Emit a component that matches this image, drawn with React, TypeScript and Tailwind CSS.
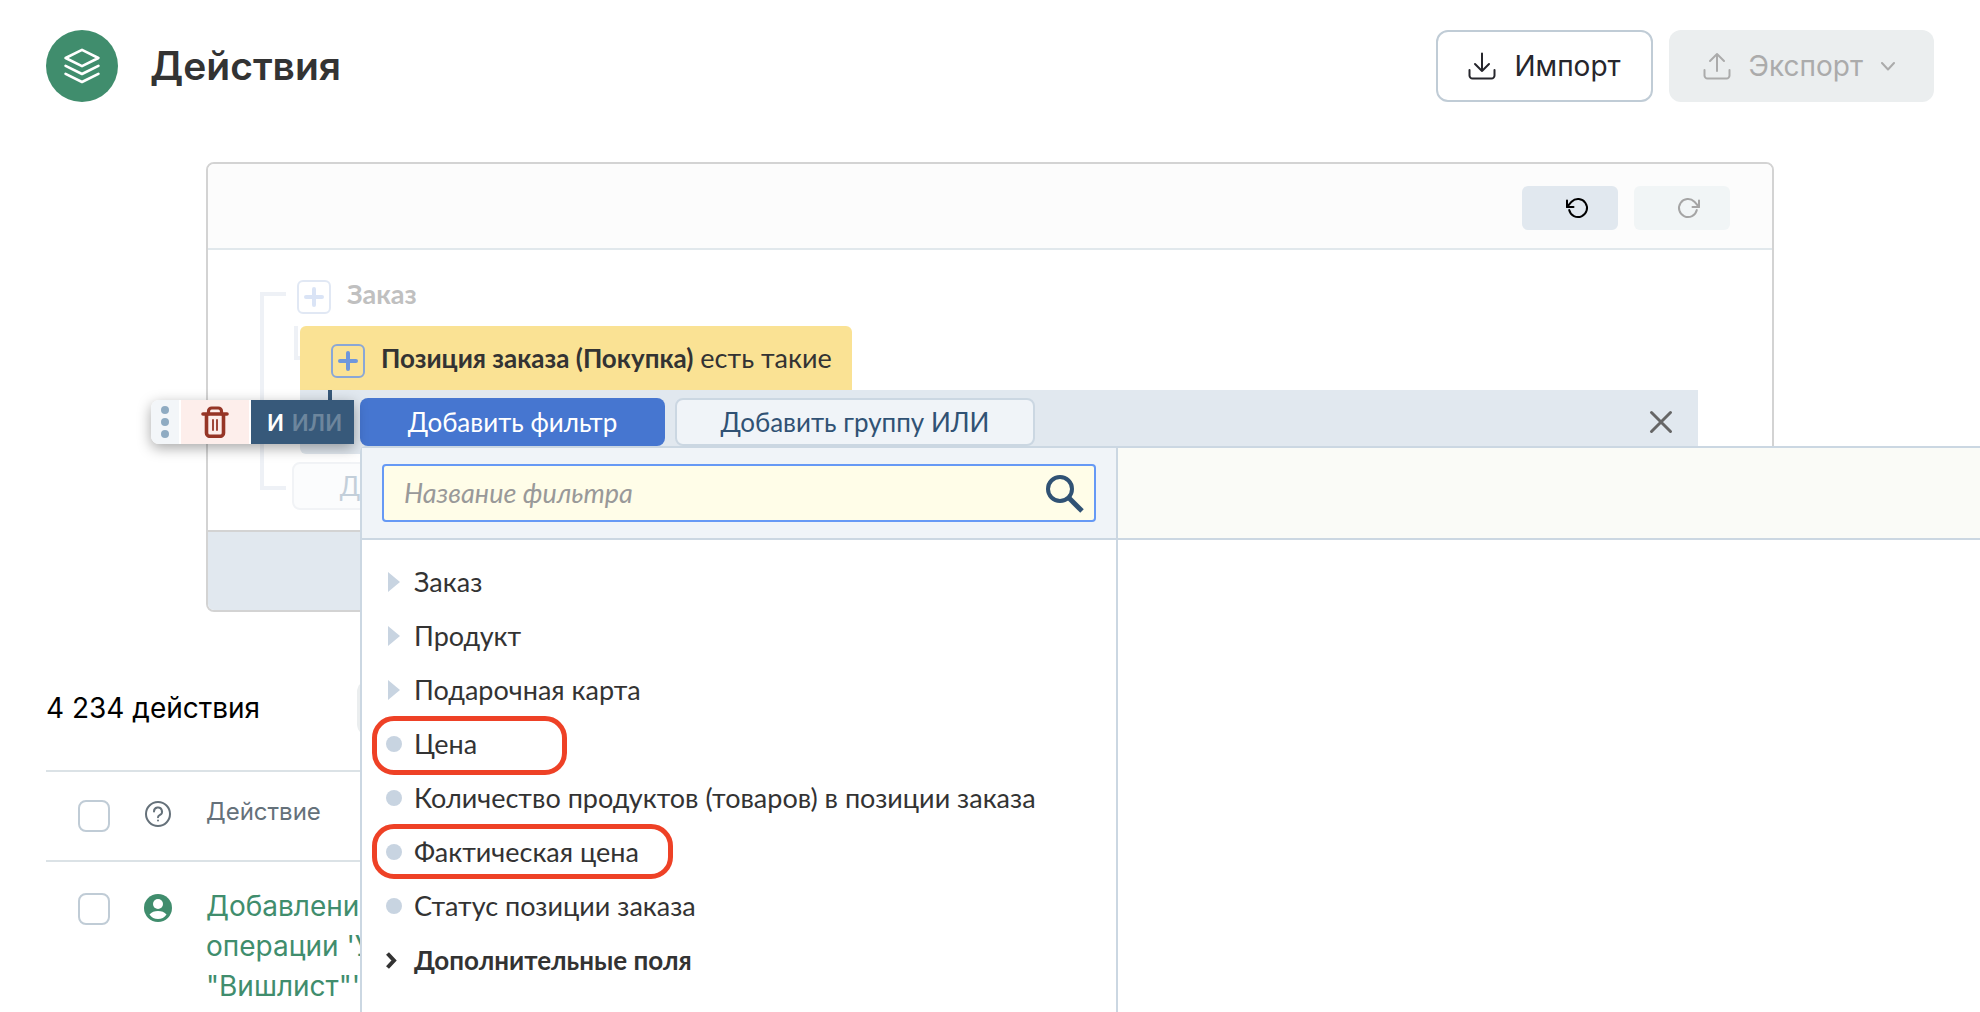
import type { ReactNode } from "react";

type FilterItem = {
  label: string;
  kind: "group" | "field" | "section";
  outline?: string;
};

const FILTERS: FilterItem[] = [
  { label: "Заказ", kind: "group" },
  { label: "Продукт", kind: "group" },
  { label: "Подарочная карта", kind: "group" },
  { label: "Цена", kind: "field", outline: "w-[195px] h-[59px]" },
  { label: "Количество продуктов (товаров) в позиции заказа", kind: "field" },
  { label: "Фактическая цена", kind: "field", outline: "w-[301px] h-[55px]" },
  { label: "Статус позиции заказа", kind: "field" },
  { label: "Дополнительные поля", kind: "section" },
];

function LayersIcon() {
  return (
    <svg width="36" height="36" viewBox="0 0 36 36" fill="none" stroke="#fff" strokeWidth="2.6" strokeLinecap="round" strokeLinejoin="round">
      <path d="M18 1.8 34.4 10 18 18.2 1.6 10z" />
      <path d="M1.6 17.8 18 26l16.4-8.2" />
      <path d="M1.6 25.8 18 34l16.4-8.2" />
    </svg>
  );
}

function TrayIcon({ up }: { up?: boolean }) {
  return (
    <svg width="28" height="28" viewBox="0 0 28 28" fill="none" stroke="currentColor" strokeWidth="2" strokeLinecap="round" strokeLinejoin="round">
      <path d={up ? "M14 19V2M7 9l7-7 7 7" : "M14 1.5v17.5M7 12l7 7 7-7"} />
      <path d="M1.5 18v5.500a3 3 0 0 0 3 3h19a3 3 0 0 0 3-3V18" />
    </svg>
  );
}

function RotateIcon({ flip }: { flip?: boolean }) {
  return (
    <svg width="24" height="24" viewBox="0 0 24 24" fill="none" stroke="currentColor" strokeWidth="2" strokeLinecap="round" strokeLinejoin="round">
      <g transform={flip ? "translate(24 0) scale(-1 1)" : undefined}>
        <path d="M2 4.500v6.500h6.500" />
        <path d="M2 11 6.600 5.700A9 9 0 1 1 4.200 14" />
      </g>
    </svg>
  );
}

function TrashIcon() {
  return (
    <svg width="28" height="32" viewBox="0 0 28 32" fill="none" stroke="#963526" strokeLinecap="round" strokeLinejoin="round">
      <path strokeWidth="3.600" d="M2 8h24M5.500 8.500V27a3.300 3.300 0 0 0 3.300 3.300h10.400A3.300 3.300 0 0 0 22.500 27V8.500" />
      <path strokeWidth="3.200" d="M7.500 8V5.200A3.200 3.200 0 0 1 10.700 2h6.600a3.200 3.200 0 0 1 3.200 3.200V8" />
      <path strokeWidth="1.800" d="M12 14v10M16 14v10" />
    </svg>
  );
}

function SearchIcon() {
  return (
    <svg width="40" height="40" viewBox="0 0 40 40" fill="none" stroke="#305274">
      <circle cx="16" cy="16" r="12" strokeWidth="4" />
      <path d="M25 25l13 13" strokeWidth="5" />
    </svg>
  );
}

function PlusButton({ label }: { label: string }) {
  return (
    <button
      type="button"
      aria-label={label}
      className="flex size-[34px] shrink-0 items-center justify-center rounded-md border-2 border-[#8aa7d6] text-[#6f97dc]"
    >
      <svg width="20" height="20" viewBox="0 0 20 20" fill="none" stroke="currentColor" strokeWidth="4" strokeLinecap="round">
        <path d="M10 2v16M2 10h16" />
      </svg>
    </button>
  );
}

function Checkbox({ label }: { label: string }) {
  return (
    <input
      type="checkbox"
      aria-label={label}
      className="block size-8 appearance-none rounded-lg border-2 border-[#c0ccd6] bg-white"
    />
  );
}

function Marker({ kind }: { kind: FilterItem["kind"] }) {
  if (kind === "group") {
    return (
      <svg width="16" height="20" viewBox="0 0 16 20" fill="#c8d4e1">
        <path d="M2 0l12 10L2 20z" />
      </svg>
    );
  }
  if (kind === "field") {
    return <span className="size-4 rounded-full bg-[#c8d4e1]" />;
  }
  return (
    <svg width="16" height="20" viewBox="0 0 16 20" fill="none" stroke="#333" strokeWidth="4">
      <path d="M1.500 3.500l6.500 7-6.500 7" />
    </svg>
  );
}

function FilterPopup() {
  return (
    <div className="absolute top-14 left-[60px] z-20 flex h-screen w-screen rounded-tl-md border-t-2 border-l-2 border-[#cbd7e2] bg-white">
      <div className="w-[756px] shrink-0 border-r-2 border-[#cbd7e2]">
        <div className="border-b-2 border-[#cbd7e2] bg-[#f0f4f8] px-5 py-4">
          <label className="flex h-[58px] items-center rounded-sm border-2 border-[#6699f5] bg-[#fffde8] pr-[10px] pl-5">
            <input
              type="text"
              aria-label="Название фильтра"
              placeholder="Название фильтра"
              className="min-w-0 flex-1 bg-transparent text-[27px] italic outline-none placeholder:text-[#999]"
            />
            <SearchIcon />
          </label>
        </div>
        <ul className="pt-[15px]">
          {FILTERS.map((item) => (
            <li key={item.label} className="relative">
              <button
                type="button"
                className={`flex h-[54px] w-full items-center gap-3 pl-6 text-left whitespace-nowrap text-[#333] ${
                  item.kind === "section" ? "text-[26px] font-bold" : "text-[27px]"
                }`}
              >
                <Marker kind={item.kind} />
                {item.label}
              </button>
              {item.outline && (
                <span
                  className={`pointer-events-none absolute -top-px left-[10px] rounded-[22px] border-5 border-[#ee4126] ${item.outline}`}
                />
              )}
            </li>
          ))}
        </ul>
      </div>
      <div className="flex-1">
        <div className="h-[92px] border-b-2 border-[#cbd7e2] bg-[#fafbf7]" />
      </div>
    </div>
  );
}

function RowTools() {
  return (
    <div className="absolute top-[10px] -left-[149px] z-10 flex h-11 gap-0.5 rounded-l-lg bg-white shadow-[0_4px_14px_rgba(0,0,0,0.35)]">
      <button type="button" aria-label="Переместить" className="flex w-7 flex-col items-center justify-center gap-1 rounded-l-lg bg-[#f3f6f9]">
        <span className="size-2 rounded-full bg-[#8fabc2]" />
        <span className="size-2 rounded-full bg-[#8fabc2]" />
        <span className="size-2 rounded-full bg-[#8fabc2]" />
      </button>
      <button type="button" aria-label="Удалить" className="flex w-[68px] items-center justify-center bg-[#fdeeeb]">
        <TrashIcon />
      </button>
      <button type="button" className="flex w-[103px] items-center justify-center gap-2 bg-[#37597a] pl-1 text-[22px] font-bold">
        <span className="text-white">И</span>
        <span className="text-[#6d869d]">ИЛИ</span>
      </button>
    </div>
  );
}

function FilterTree() {
  return (
    <div className="flex h-[280px] pt-[30px] pl-[52px] font-['Lato','Noto_Sans',sans-serif]">
      <div className="mt-3 h-[198px] w-[26px] shrink-0 border-y-4 border-l-4 border-[#eef1f6]" />
      <div className="flex-1">
        <div className="flex h-[34px] items-center gap-4 pl-[11px] text-[27px] font-bold">
          <span className="opacity-25">
            <PlusButton label="Добавить" />
          </span>
          <span className="pb-1.5 text-[#c0c0c0]">Заказ</span>
        </div>
        <div className="mt-3 ml-2 flex">
          <div className="h-[34px] w-1.5 shrink-0 border-b-4 border-l-4 border-[#eef1f6]" />
          <div className="flex-1 pr-[74px]">
            <div className="flex h-16 w-fit items-center gap-4 rounded-t-md bg-[#fae294] pr-5 pl-[31px] text-[27px] text-[#333]">
              <span className="pt-1.5">
                <PlusButton label="Добавить условие" />
              </span>
              <span className="whitespace-nowrap">
                <b className="text-[26px]">Позиция заказа (Покупка)</b> есть такие
              </span>
            </div>
            <div className="relative flex h-16 items-start rounded-bl-md bg-[#e1e8ef] pt-2 pl-[60px]">
              <span className="absolute top-0 left-7 h-[10px] w-1 bg-[#37597a]" />
              <RowTools />
              <button type="button" className="h-12 min-w-[305px] rounded-lg bg-[#4676d0] text-[26px] whitespace-nowrap text-white">
                Добавить фильтр
              </button>
              <button
                type="button"
                className="ml-[10px] h-12 min-w-[360px] rounded-lg border-2 border-[#cbd7e2] bg-[#f0f4f8] text-[26px] whitespace-nowrap text-[#305274]"
              >
                Добавить группу ИЛИ
              </button>
              <button type="button" aria-label="Закрыть" className="mr-6 ml-auto flex h-12 items-center">
                <svg width="26" height="26" viewBox="0 0 26 26" fill="none" stroke="#666" strokeWidth="3" strokeLinecap="round">
                  <path d="M3.500 3.500l19 19M22.500 3.500l-19 19" />
                </svg>
              </button>
              <FilterPopup />
            </div>
          </div>
        </div>
        <button
          type="button"
          className="mt-2 ml-1.5 h-12 min-w-[305px] rounded-lg border-2 border-[#f1f3f6] bg-[#fbfcfd] text-[26px] whitespace-nowrap text-[#c3cfda]"
        >
          Добавить фильтр
        </button>
      </div>
    </div>
  );
}

function HeaderButton({ children, className }: { children: ReactNode; className: string }) {
  return (
    <button type="button" className={`flex h-[72px] items-center gap-[18px] rounded-xl text-[28px] ${className}`}>
      {children}
    </button>
  );
}

export default function App() {
  return (
    <div className="h-screen overflow-hidden bg-white px-[46px] pt-[30px] font-['Inter',sans-serif]">
      <header className="flex items-center justify-between">
        <div className="flex items-center gap-8">
          <span className="flex size-[72px] items-center justify-center rounded-full bg-[#408d6d]">
            <LayersIcon />
          </span>
          <h1 className="text-[39px] font-semibold text-[#333]">Действия</h1>
        </div>
        <div className="flex gap-4">
          <HeaderButton className="border-2 border-[#c0ccd6] px-[30px] text-[#26262c]">
            <TrayIcon />
            Импорт
          </HeaderButton>
          <HeaderButton className="bg-[#ebeeef] pr-[39px] pl-[34px] text-[#ababab]">
            <TrayIcon up />
            Экспорт
            <svg width="14" height="9" viewBox="0 0 14 9" fill="none" stroke="currentColor" strokeWidth="2" strokeLinecap="round" strokeLinejoin="round">
              <path d="M1 1l6 6.500L13 1" />
            </svg>
          </HeaderButton>
        </div>
      </header>

      <section className="mx-auto mt-[60px] w-full max-w-[1568px] rounded-lg border-2 border-[#d3d3d3]">
        <div className="flex items-center justify-end gap-4 rounded-t-md border-b-2 border-[#e1e8ec] bg-[#fcfcfc] pt-[22px] pr-[42px] pb-[18px]">
          <button type="button" aria-label="Отменить" className="flex h-11 w-24 items-center justify-center rounded-md bg-[#e1e8ef] pl-[14px] text-black">
            <RotateIcon />
          </button>
          <button type="button" aria-label="Повторить" className="flex h-11 w-24 items-center justify-center rounded-md bg-[#f1f5f6] pl-[14px] text-[#a5a5a5]">
            <RotateIcon flip />
          </button>
        </div>
        <FilterTree />
        <div className="h-20 rounded-b-md border-t-2 border-[#d3d3d3] bg-[#e1e8ef]" />
      </section>

      <div className="mt-[68px] mb-[34px] flex h-14 items-center text-[28px] text-black">
        <span className="w-[311px]">4 234 действия</span>
        <button type="button" aria-label="Настроить" className="h-14 w-40 rounded-xl bg-[#ebeeef]" />
      </div>

      <table className="w-full table-fixed border-collapse text-left">
        <thead>
          <tr className="h-[90px] border-y-2 border-[#dbe2e6] align-top">
            <th className="w-[98px] pt-7 pl-8">
              <Checkbox label="Выбрать все" />
            </th>
            <th className="w-[62px] pt-7">
              <svg width="28" height="28" viewBox="0 0 28 28" fill="none" stroke="#65717a" strokeWidth="2" strokeLinecap="round">
                <circle cx="14" cy="14" r="12" />
                <path d="M10 11.500a4 4 0 1 1 6 3.400c-1.300.8-2 1.300-2 2.400" />
                <path d="M14 20.500v.1" />
              </svg>
            </th>
            <th className="pt-[22px] text-2xl leading-9 font-normal text-[#65717a]">Действие</th>
          </tr>
        </thead>
        <tbody>
          <tr className="align-top">
            <td className="pt-[31px] pl-8">
              <Checkbox label="Выбрать действие" />
            </td>
            <td className="pt-8">
              <svg width="28" height="28" viewBox="0 0 28 28">
                <circle cx="14" cy="14" r="14" fill="#408d6d" />
                <circle cx="14" cy="10" r="5" fill="#fff" />
                <path d="M5.500 20.500c2-2.500 5-3.500 8.500-3.500s6.500 1 8.500 3.500c-2 3-5 4.500-8.500 4.500s-6.500-1.500-8.500-4.500z" fill="#fff" />
              </svg>
            </td>
            <td className="pt-6 text-[28px] leading-10 text-[#408d6d]">
              <a href="#action" className="block">
                Добавление
                <br />
                операции 'Уд
                <br />
                "Вишлист"'
              </a>
            </td>
          </tr>
        </tbody>
      </table>
    </div>
  );
}
